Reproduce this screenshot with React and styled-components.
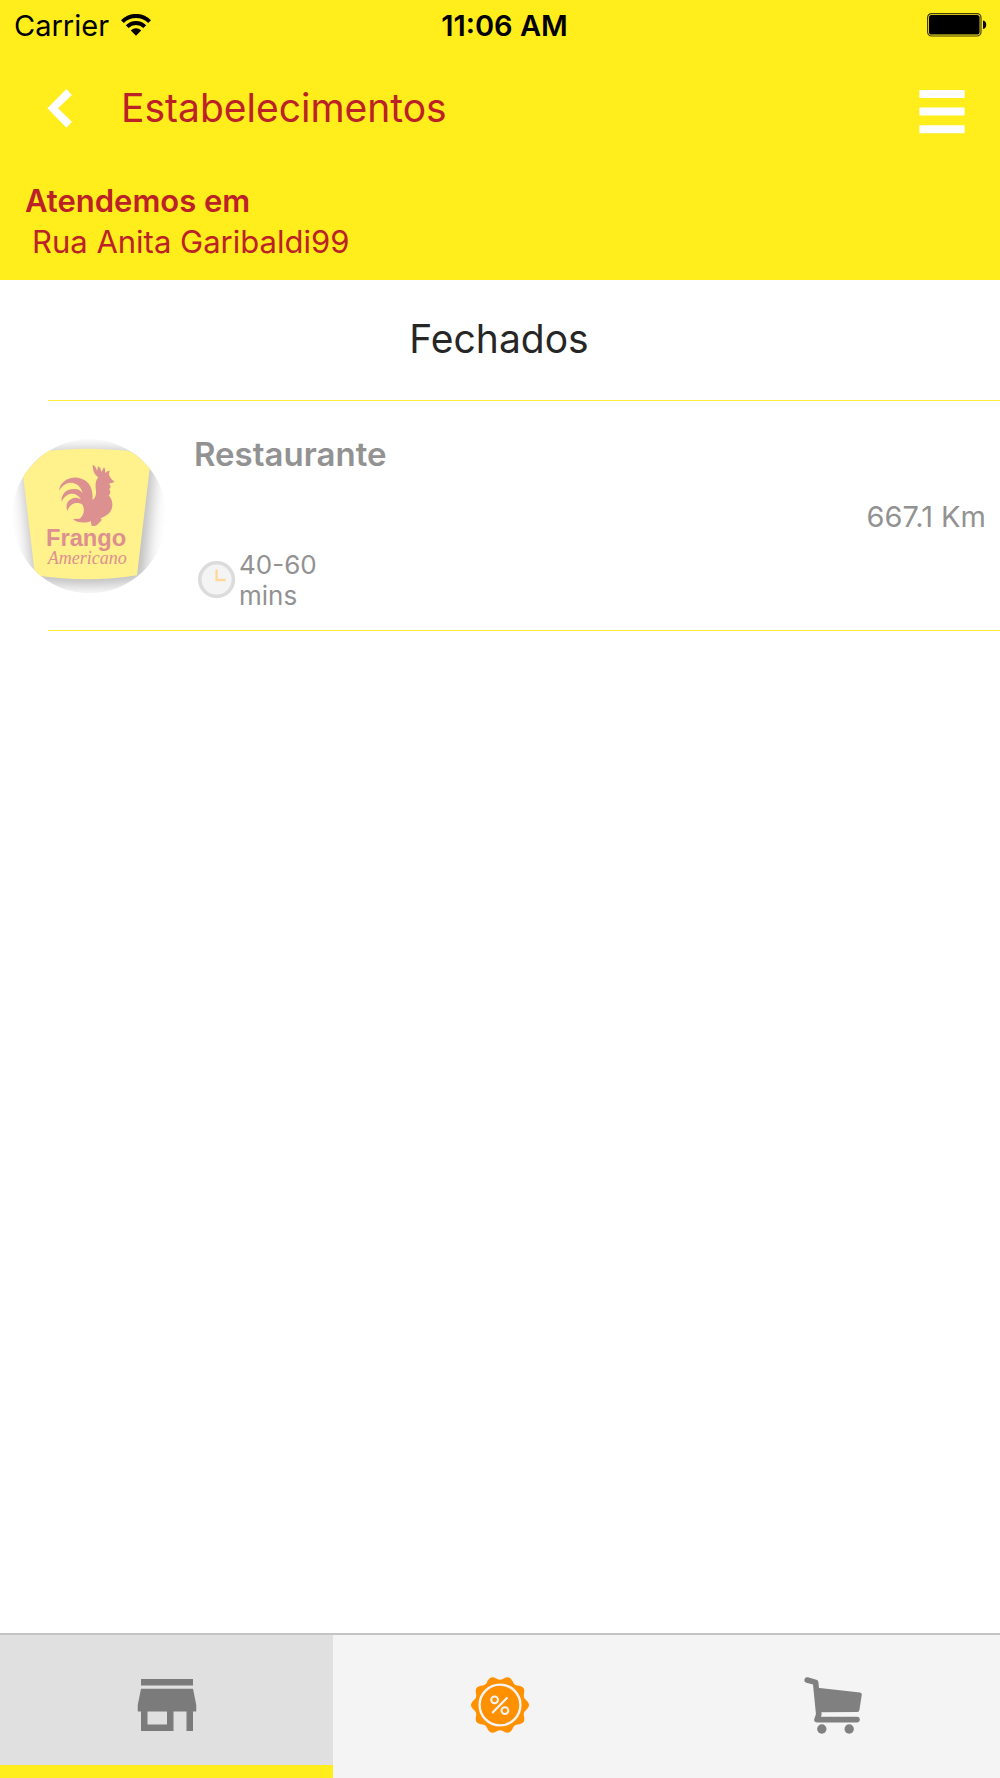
import React, {useState} from 'react'
import styled, {createGlobalStyle} from 'styled-components'
import { MdStore } from 'react-icons/md'

const colors = {
    yellow: '#ffed1c',
    red: '#bb2228',
    gray: '#929292',
    icon: '#7b7b7b'
}

const restaurants = [
    {id: 1, name: 'Restaurante', distance: '667.1 Km', time: '40-60 mins'}
]

const WifiIcon = () => (
    <svg width='30' height='22' viewBox='0 0 30 22' aria-hidden='true'>
        <path d='M0 6.2A21 21 0 0 1 30 6.2L27.2 9A17.4 17.4 0 0 0 2.8 9Z' />
        <path d='M4.8 11.3A14.4 14.4 0 0 1 25.2 11.3L22.4 14.1A10.6 10.6 0 0 0 7.6 14.1Z' />
        <path d='M9.8 16.5A7.4 7.4 0 0 1 20.2 16.5L15 21.7Z' />
    </svg>
)

const BatteryIcon = () => (
    <svg width='60' height='24' viewBox='0 0 60 24' aria-hidden='true'>
        <rect x='0.6' y='0.6' width='53.4' height='22.4' rx='4' fill='none' stroke='#463f08' strokeWidth='1.2' />
        <rect x='2' y='2' width='50.6' height='19.6' rx='2.6' />
        <path d='M56 7.6C58.4 8 59.2 9.8 59.2 11.8S58.4 15.6 56 16Z' />
    </svg>
)

const BackIcon = () => (
    <svg width='26' height='40' viewBox='0 0 26 40' aria-hidden='true'>
        <path d='M19.4 0.9L24.9 6.9L11 20.3L24.9 33.7L19.4 39.7L0.4 20.3Z' fill='#fff' />
    </svg>
)

const MenuIcon = () => (
    <svg width='46' height='44' viewBox='0 0 46 44' aria-hidden='true'>
        <path d='M0.4 0H45.6V8H0.4ZM0.4 17.6H45.6V25.4H0.4ZM0.4 35.2H45.6V43.2H0.4Z' fill='#fff' />
    </svg>
)

const ClockIcon = () => (
    <svg width='38' height='38' viewBox='0 0 38 38' aria-hidden='true'>
        <circle cx='18.6' cy='18.6' r='16.8' fill='#f4f4f4' stroke='#dcdcdc' strokeWidth='3.6' />
        <path d='M18.6 8.6V19H27.6' fill='none' stroke='#ffd79a' strokeWidth='2.4' />
    </svg>
)

// Outline of the badge is a circle with ten soft bumps
const badgePath = Array.from({length: 120}, (_, i) => {
    const angle = i * Math.PI / 60
    const radius = 27.1 + 1.9 * Math.cos(10 * angle)
    const x = (30 + radius * Math.cos(angle)).toFixed(2)
    const y = (30 + radius * Math.sin(angle)).toFixed(2)
    return `${i ? 'L' : 'M'}${x} ${y}`
}).join('') + 'Z'

const OfferIcon = () => (
    <svg width='60' height='60' viewBox='0 0 60 60' aria-hidden='true'>
        <path d={badgePath} fill='#ff9100' />
        <g fill='none' stroke='#f4f4f4'>
            <circle cx='30' cy='30' r='20.4' strokeWidth='2.4' />
            <circle cx='24.6' cy='24.8' r='3.4' strokeWidth='2' />
            <circle cx='34.9' cy='35.6' r='3.4' strokeWidth='2' />
            <path d='M37.4 22.6L22.2 38' strokeWidth='2.2' />
        </g>
    </svg>
)

const CartIcon = () => (
    <svg width='60' height='60' viewBox='0 0 60 60' aria-hidden='true'>
        <g fill='#808080' stroke='#808080' strokeLinecap='round' strokeLinejoin='round'>
            <path d='M4.2 5L12.6 7.4L15.8 39.4L14 44.6H54' fill='none' strokeWidth='5.6' />
            <path d='M16.4 15L56.8 19.4L54.4 35L18.2 35.2Z' strokeWidth='4' />
            <circle cx='18.8' cy='54' r='4.7' stroke='none' />
            <circle cx='46.2' cy='54' r='4.7' stroke='none' />
        </g>
    </svg>
)

const RestaurantLogo = () => (
    <svg width='155' height='155' viewBox='36 55 465 465' role='img' aria-label='Frango Americano'>
        <defs>
            <clipPath id='logo-clip'>
                <circle cx='268' cy='287' r='231' />
            </clipPath>
            <filter id='logo-shadow' x='-30%' y='-30%' width='160%' height='160%'>
                <feGaussianBlur stdDeviation='22' />
            </filter>
        </defs>
        <g clipPath='url(#logo-clip)'>
            <path d='M62 98Q268 74 466 98L434 480Q268 506 98 482Z' fill='#b8b8b8' filter='url(#logo-shadow)' />
            <path d='M62 103Q268 65 454 103L411 464Q268 488 105 464Z' fill='#fff28c' />
            <g fill='#dd9090'>
                <path d='M278 132C286 135 289 142 291 151L294 137C301 140 303 147 304 154L312 140C317 145 314 152 317 157C322 151 327 149 329 151C327 157 326 162 329 167C332 174 337 178 344 184L327 189C334 196 332 203 327 205C333 211 332 220 326 224C345 245 338 274 319 284C311 289 305 292 301 294L306 297C300 303 292 312 288 315L275 316L272 301C258 309 229 307 219 295L239 294C252 284 256 264 246 251C237 244 211 243 202 271C194 248 207 233 226 231C232 231 238 233 243 236C229 212 199 213 185 243C182 217 205 200 231 206C238 208 244 212 248 217C237 180 198 175 177 210C181 175 229 156 262 185C277 199 278 220 278 238C289 229 289 216 287 203C286 191 287 177 295 170C283 162 278 148 278 132Z' />
                <LogoName x='138' y='376'>Frango</LogoName>
                <LogoScript x='143' y='431'>Americano</LogoScript>
            </g>
        </g>
    </svg>
)

const tabs = [
    {id: 'stores', label: 'Estabelecimentos', icon: <MdStore size={78} color={colors.icon} />},
    {id: 'offers', label: 'Ofertas', icon: <OfferIcon />},
    {id: 'cart', label: 'Carrinho', icon: <CartIcon />}
]

const App = () => {
    const [activeTab, setActiveTab] = useState('stores')

    return (
        <Page>
            <GlobalStyle />
            <Header>
                <StatusBar>
                    <Carrier>
                        Carrier
                        <WifiIcon />
                    </Carrier>
                    <Time>11:06 AM</Time>
                    <Battery><BatteryIcon /></Battery>
                </StatusBar>
                <TitleBar>
                    <IconButton type='button' aria-label='Voltar'><BackIcon /></IconButton>
                    <Title>Estabelecimentos</Title>
                    <IconButton type='button' aria-label='Menu' $low><MenuIcon /></IconButton>
                </TitleBar>
                <Address>
                    <strong>Atendemos em</strong>
                    <span>Rua Anita Garibaldi99</span>
                </Address>
            </Header>
            <Content>
                <SectionTitle>Fechados</SectionTitle>
                <Divider />
                {restaurants.map(restaurant => (
                    <React.Fragment key={restaurant.id}>
                        <RestaurantRow>
                            <RestaurantLogo />
                            <Info>
                                <Name>{restaurant.name}</Name>
                                <DeliveryTime>
                                    <ClockIcon />
                                    <span>{restaurant.time}</span>
                                </DeliveryTime>
                            </Info>
                            <Distance>{restaurant.distance}</Distance>
                        </RestaurantRow>
                        <Divider />
                    </React.Fragment>
                ))}
            </Content>
            <TabBar>
                {tabs.map(tab => (
                    <Tab
                        key={tab.id}
                        href={`#${tab.id}`}
                        aria-label={tab.label}
                        $active={tab.id === activeTab}
                        onClick={() => setActiveTab(tab.id)}
                    >
                        {tab.icon}
                    </Tab>
                ))}
            </TabBar>
        </Page>
    )
}

const GlobalStyle = createGlobalStyle`
    * {
        box-sizing: border-box;
    }
    body {
        margin: 0;
        background: #fff;
        font-family: Inter, 'Liberation Sans', sans-serif;
    }
    svg {
        display: block;
        flex-shrink: 0;
    }
`

const Page = styled.div`
    display: flex;
    flex-direction: column;
    min-height: 100vh;
`

const Header = styled.header`
    background: ${colors.yellow};
    color: ${colors.red};
    padding-bottom: 18px;
`

const StatusBar = styled.div`
    display: grid;
    grid-template-columns: 1fr auto 1fr;
    align-items: center;
    height: 50px;
    padding: 0 5px 0 14px;
    color: #000;
    font-size: 29px;
`

const Carrier = styled.div`
    display: flex;
    align-items: center;
    gap: 12px;
`

const Time = styled.time`
    font-weight: 600;
`

const Battery = styled.div`
    justify-self: end;
    margin-right: 8px;
`

const TitleBar = styled.div`
    display: flex;
    align-items: center;
    height: 115px;
    padding: 0 35px 0 47px;
`

const IconButton = styled.button`
    padding: ${p => p.$low ? '8px 0 0' : '0'};
    border: 0;
    background: none;
    cursor: pointer;
`

const Title = styled.h1`
    flex: 1;
    margin: 0 0 0 48px;
    font-size: 39px;
    font-weight: 400;
    line-height: 48px;
`

const Address = styled.div`
    display: flex;
    flex-direction: column;
    padding: 15px 25px 0;
    font-size: 31px;
    line-height: 41px;

    & strong {
        font-weight: 600;
    }
    & span {
        padding-left: 7px;
    }
`

const Content = styled.main`
    flex: 1;
`

const SectionTitle = styled.h2`
    margin: 0;
    padding: 34px 2px 36px 0;
    color: #262626;
    font-size: 39px;
    font-weight: 400;
    line-height: 50px;
    text-align: center;
`

const Divider = styled.hr`
    height: 1px;
    margin: 0 0 0 48px;
    border: 0;
    background: #ffee3c;
`

const RestaurantRow = styled.article`
    display: flex;
    align-items: center;
    height: 229px;
    padding: 2px 14px 0 12px;
    color: ${colors.gray};
`

const Info = styled.div`
    display: flex;
    flex: 1;
    flex-direction: column;
    align-self: stretch;
    justify-content: space-between;
    margin-left: 27px;
    padding: 31px 0 19px;
`

const Name = styled.h3`
    margin: 0;
    font-size: 33px;
    font-weight: 600;
    line-height: 40px;
`

const DeliveryTime = styled.div`
    display: flex;
    align-items: center;
    gap: 3px;
    padding-left: 4px;
    font-size: 26px;
    line-height: 31px;

    & span {
        width: 96px;
    }
`

const Distance = styled.span`
    font-size: 29px;
`

const LogoName = styled.text`
    font-family: 'Liberation Sans', sans-serif;
    font-size: 71px;
    font-weight: 700;
`

const LogoScript = styled.text`
    font-family: 'Liberation Serif', serif;
    font-size: 54px;
    font-style: italic;
`

const TabBar = styled.nav`
    display: flex;
    border-top: 2px solid #c4c4c4;
    background: #f4f4f4;
`

const Tab = styled.a`
    display: flex;
    flex: 1;
    align-items: center;
    justify-content: center;
    height: 143px;
    padding-top: 9px;
    border-bottom: 13px solid ${p => p.$active ? colors.yellow : 'transparent'};
    background: ${p => p.$active ? '#e0e0e0' : 'transparent'};
`

export default App
